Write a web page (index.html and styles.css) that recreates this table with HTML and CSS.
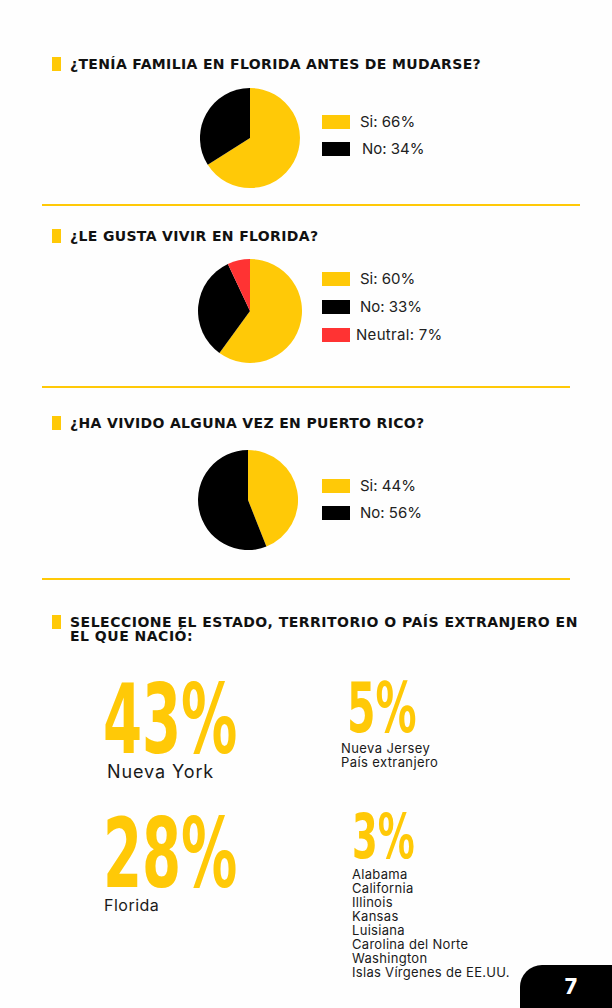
FILE: index.html
```html
<!DOCTYPE html>
<html lang="es">
<head>
<meta charset="utf-8">
<title>Encuesta 7</title>
<link rel="stylesheet" href="styles.css">
</head>
<body>
<div class="page">
  <section class="q q1">
    <h2 class="q-head">¿TENÍA FAMILIA EN FLORIDA ANTES DE MUDARSE?</h2>
    <div class="chart chart1">
      <svg class="pie" width="100" height="100" viewBox="0 0 100 100">
        <path d="M50,50 L50,0 A50,50 0 1 1 7.75,76.8 Z" fill="#ffc907"/>
        <path d="M50,50 L7.75,76.8 A50,50 0 0 1 50,0 Z" fill="#000"/>
      </svg>
      <ul class="legend">
        <li><span class="sw y"></span><span class="lab">Si: 66%</span></li>
        <li><span class="sw k"></span><span class="lab lab-no">No: 34%</span></li>
      </ul>
    </div>
  </section>
  <div class="rule rule-wide"></div>

  <section class="q q2">
    <h2 class="q-head">¿LE GUSTA VIVIR EN FLORIDA?</h2>
    <div class="chart chart2">
      <svg class="pie" width="104" height="104" viewBox="0 0 104 104">
        <path d="M52,52 L52,0 A52,52 0 1 1 21.44,94.07 Z" fill="#ffc907"/>
        <path d="M52,52 L21.44,94.07 A52,52 0 0 1 29.86,4.95 Z" fill="#000"/>
        <path d="M52,52 L29.86,4.95 A52,52 0 0 1 52,0 Z" fill="#ff3333"/>
      </svg>
      <ul class="legend legend3">
        <li><span class="sw y"></span><span class="lab">Si: 60%</span></li>
        <li><span class="sw k"></span><span class="lab">No: 33%</span></li>
        <li><span class="sw r"></span><span class="lab lab-neu">Neutral: 7%</span></li>
      </ul>
    </div>
  </section>
  <div class="rule"></div>

  <section class="q q3">
    <h2 class="q-head">¿HA VIVIDO ALGUNA VEZ EN PUERTO RICO?</h2>
    <div class="chart chart3">
      <svg class="pie" width="100" height="100" viewBox="0 0 100 100">
        <path d="M50,50 L50,0 A50,50 0 0 1 68.4,96.5 Z" fill="#ffc907"/>
        <path d="M50,50 L68.4,96.5 A50,50 0 1 1 50,0 Z" fill="#000"/>
      </svg>
      <ul class="legend">
        <li><span class="sw y"></span><span class="lab">Si: 44%</span></li>
        <li><span class="sw k"></span><span class="lab">No: 56%</span></li>
      </ul>
    </div>
  </section>
  <div class="rule"></div>

  <section class="q q4">
    <h2 class="q-head q-head-wide">SELECCIONE EL ESTADO, TERRITORIO O PAÍS EXTRANJERO EN<br>EL QUE NACIÓ:</h2>
    <div class="stats">
      <div class="stat stat-a">
        <div class="big big-lg">43%</div>
        <div class="place place-lg">Nueva York</div>
      </div>
      <div class="stat stat-b">
        <div class="big big-md">5%</div>
        <div class="place place-sm">Nueva Jersey<br>País extranjero</div>
      </div>
      <div class="stat stat-c">
        <div class="big big-lg">28%</div>
        <div class="place place-fl">Florida</div>
      </div>
      <div class="stat stat-d">
        <div class="big big-sm">3%</div>
        <div class="place place-sm place-list">Alabama<br>California<br>Illinois<br>Kansas<br>Luisiana<br>Carolina del Norte<br>Washington<br>Islas Vírgenes de EE.UU.</div>
      </div>
    </div>
  </section>

  <div class="pgnum">7</div>
</div>
</body>
</html>
```

FILE: styles.css
```css
* { box-sizing: border-box; }
html, body { margin: 0; padding: 0; background: #fefefe; }
body { font-family: "Inter", "Liberation Sans", sans-serif; color: #1a1a1a; }

.page {
  position: relative;
  width: 612px;
  height: 1008px;
  overflow: hidden;
  padding-top: 57px;
}

.q-head {
  display: flex;
  align-items: flex-start;
  gap: 9px;
  margin: 0;
  padding-left: 52px;
  font-family: "DejaVu Sans", "Inter", sans-serif;
  font-weight: 700;
  font-size: 14px;
  line-height: 14px;
  letter-spacing: 0.35px;
  color: #111;
}
.q-head-wide { letter-spacing: 0.5px; }
.q-head::before {
  content: "";
  flex: none;
  width: 9px;
  height: 14px;
  background: #ffc907;
}

.chart { display: flex; align-items: center; }
.pie { display: block; flex: none; }
.chart1 { margin-top: 17px; padding-left: 200px; }
.chart1 .legend { margin-left: 22px; margin-top: -6px; }
.chart2 { margin-top: 16px; padding-left: 198px; }
.chart2 .legend { margin-left: 20px; margin-top: -8px; }
.chart3 { margin-top: 20px; padding-left: 198px; }
.chart3 .legend { margin-left: 24px; margin-top: -2px; }

.legend {
  list-style: none;
  margin: 0;
  padding: 0;
  display: flex;
  flex-direction: column;
  gap: 13px;
}
.legend3 { gap: 14px; }
.legend li { display: flex; align-items: center; height: 14px; }
.sw { width: 28px; height: 14px; flex: none; }
.sw.y { background: #ffc907; }
.sw.k { background: #000; }
.sw.r { background: #ff3333; }
.lab {
  margin-left: 10px;
  font-size: 15px;
  line-height: 14px;
  color: #222;
}
.lab-no { margin-left: 12px; }
.lab-neu { margin-left: 6px; letter-spacing: 0.3px; }

.rule { height: 2px; background: #ffc907; margin-left: 42px; width: 528px; }
.rule-wide { width: 538px; margin-top: 16px; }
.q2 { margin-top: 23px; }
.q2 + .rule { margin-top: 23px; }
.q3 { margin-top: 28px; }
.q3 + .rule { margin-top: 28px; }
.q4 { margin-top: 35px; }

.stats {
  display: grid;
  grid-template-columns: 238px 271px;
  align-items: start;
  padding-left: 103px;
  margin-top: 40px;
}
.stat { display: flex; flex-direction: column; align-items: flex-start; }
.stat-a { margin-top: 2px; }
.stat-c { margin-top: 37px; }
.stat-d { margin-top: 32px; padding-left: 11px; }

.big {
  font-family: "DejaVu Sans Condensed", "Liberation Sans Narrow", "Liberation Sans", sans-serif;
  font-stretch: condensed;
  font-weight: 700;
  color: #ffc907;
  transform-origin: left top;
  transform: scaleX(0.65);
  white-space: nowrap;
}
.big-lg { font-size: 96px; line-height: 70px; height: 70px; }
.big-md { font-size: 70px; line-height: 51px; height: 51px; margin-left: 6px; }
.big-sm { font-size: 63px; line-height: 46px; height: 46px; }

.place { color: #1a1a1a; }
.place-lg { font-size: 18px; line-height: 20px; letter-spacing: 0.9px; margin-top: 7px; margin-left: 4px; }
.place-fl { font-size: 16px; line-height: 18px; letter-spacing: 0.5px; margin-top: 7px; margin-left: 1px; }
.place-sm { font-size: 13px; line-height: 14px; letter-spacing: 0.4px; margin-top: 7px; }
.place-list { margin-top: 7px; letter-spacing: 0.3px; }

.pgnum {
  position: absolute;
  right: 0;
  bottom: 0;
  width: 92px;
  height: 43px;
  padding-left: 10px;
  background: #000;
  border-top-left-radius: 22px;
  color: #fff;
  font-family: "Inter", "Liberation Sans", sans-serif;
  font-weight: 800;
  font-size: 21px;
  display: flex;
  align-items: center;
  justify-content: center;
}
```
